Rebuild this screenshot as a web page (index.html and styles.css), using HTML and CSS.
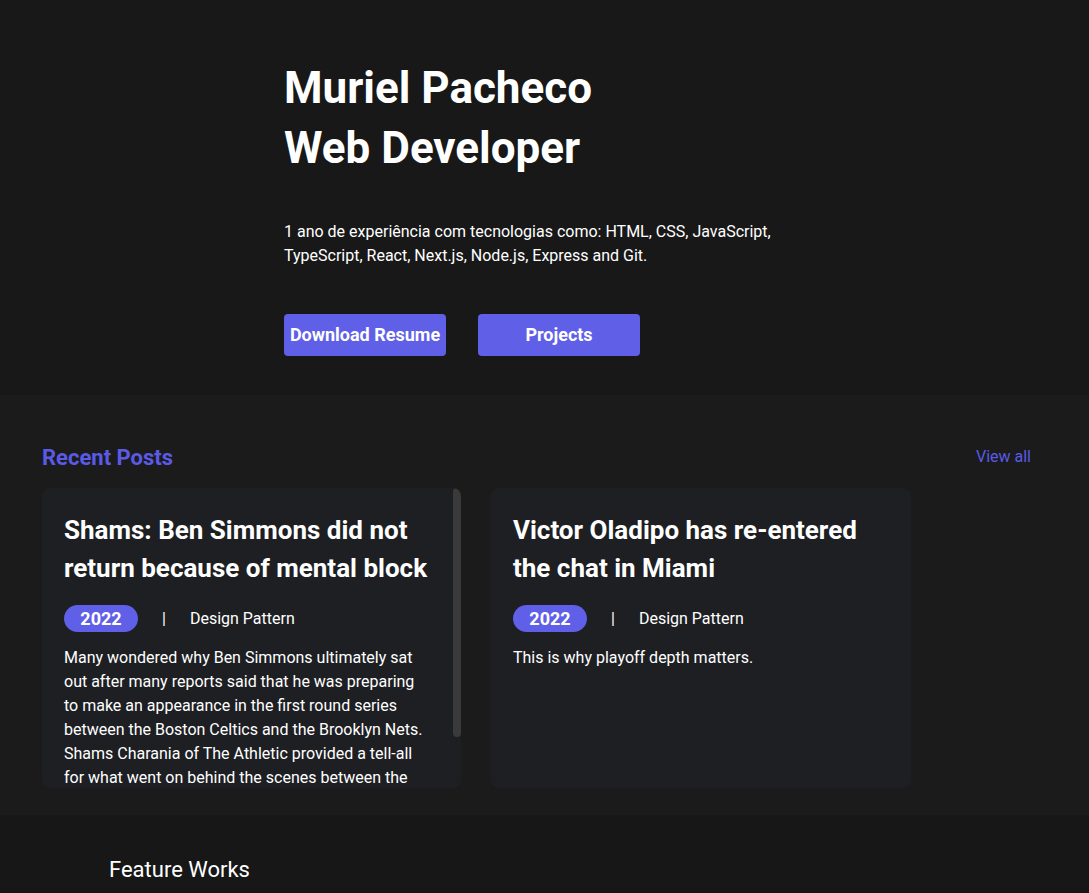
FILE: index.html
```html
<!DOCTYPE html>
<html lang="pt">
<head>
<meta charset="utf-8">
<title>Muriel Pacheco</title>
<link rel="stylesheet" href="styles.css">
</head>
<body>
<section class="hero">
  <h1 class="hero-title">Muriel Pacheco<br>Web Developer</h1>
  <p class="hero-text">1 ano de experiência com tecnologias como: HTML, CSS, JavaScript,<br>TypeScript, React, Next.js, Node.js, Express and Git.</p>
  <div class="hero-actions">
    <a class="btn" href="#">Download Resume</a>
    <a class="btn" href="#">Projects</a>
  </div>
</section>
<section class="posts">
  <div class="posts-head">
    <h2 class="posts-title">Recent Posts</h2>
    <a class="view-all" href="#">View all</a>
  </div>
  <div class="cards">
    <article class="card card-scroll">
      <h3 class="card-title">Shams: Ben Simmons did not return because of mental block</h3>
      <div class="meta"><span class="badge">2022</span><span class="sep">|</span><span class="cat">Design Pattern</span></div>
      <p class="card-text">Many wondered why Ben Simmons ultimately sat out after many reports said that he was preparing to make an appearance in the first round series between the Boston Celtics and the Brooklyn Nets. Shams Charania of The Athletic provided a tell-all for what went on behind the scenes between the two sides.</p>
      <span class="scroll-thumb"></span>
    </article>
    <article class="card">
      <h3 class="card-title">Victor Oladipo has re-entered the chat in Miami</h3>
      <div class="meta"><span class="badge">2022</span><span class="sep">|</span><span class="cat">Design Pattern</span></div>
      <p class="card-text">This is why playoff depth matters.</p>
    </article>
  </div>
</section>
<section class="works">
  <h2 class="works-title">Feature Works</h2>
</section>
</body>
</html>
```
FILE: styles.css
```css
* { box-sizing: border-box; }
html, body { margin: 0; padding: 0; }
body {
  background: #171717;
  color: #ffffff;
  font-family: Roboto, "Noto Sans", Arial, sans-serif;
}
a { text-decoration: none; }

.hero {
  background: #181818;
  padding: 58px 0 39px 284px;
  height: 395px;
}
.hero-title {
  margin: 0;
  font-size: 44px;
  line-height: 60px;
  font-weight: 700;
}
.hero-text {
  margin: 42px 0 0;
  font-size: 16px;
  line-height: 24px;
}
.hero-actions {
  display: flex;
  gap: 32px;
  margin-top: 46px;
}
.btn {
  display: flex;
  align-items: center;
  justify-content: center;
  width: 162px;
  height: 42px;
  padding-bottom: 2px;
  background: #5f5fe8;
  color: #fff;
  border-radius: 4px;
  font-size: 18px;
  font-weight: 700;
}

.posts {
  background: #1b1b1b;
  padding: 42px 58px 28px 42px;
  height: 420px;
}
.posts-head {
  display: flex;
  justify-content: space-between;
  align-items: center;
  height: 36px;
  margin-bottom: 15px;
}
.posts-title {
  margin: 0;
  font-size: 22px;
  font-weight: 700;
  color: #5a5ae6;
  padding-top: 4px;
}
.view-all {
  color: #5a5ae6;
  font-size: 16px;
  padding-top: 2px;
}
.cards {
  display: flex;
  gap: 30px;
}
.card {
  position: relative;
  width: 420px;
  height: 300px;
  background: #1e1f23;
  border-radius: 8px;
  padding: 23px 22px;
  overflow: hidden;
}
.card-scroll { width: 419px; padding-right: 30px; }
.scroll-thumb {
  position: absolute;
  top: 0;
  right: 0;
  width: 8px;
  height: 249px;
  border-radius: 4px;
  background: #3a3a3b;
}
.card-title {
  margin: 0;
  font-size: 26px;
  line-height: 38px;
  font-weight: 700;
}
.meta {
  display: flex;
  align-items: center;
  margin-top: 18px;
  font-size: 16px;
}
.badge {
  display: inline-flex;
  align-items: center;
  justify-content: center;
  width: 74px;
  height: 27px;
  border-radius: 14px;
  background: #5f5fe8;
  font-size: 18px;
  font-weight: 700;
}
.sep { margin: 0 24px; }
.card-text {
  margin: 14px 0 0;
  font-size: 16px;
  line-height: 24px;
}

.works {
  background: #171717;
  padding: 42px 109px;
  min-height: 100px;
}
.works-title {
  margin: 0;
  font-size: 22px;
  font-weight: 400;
}
```
